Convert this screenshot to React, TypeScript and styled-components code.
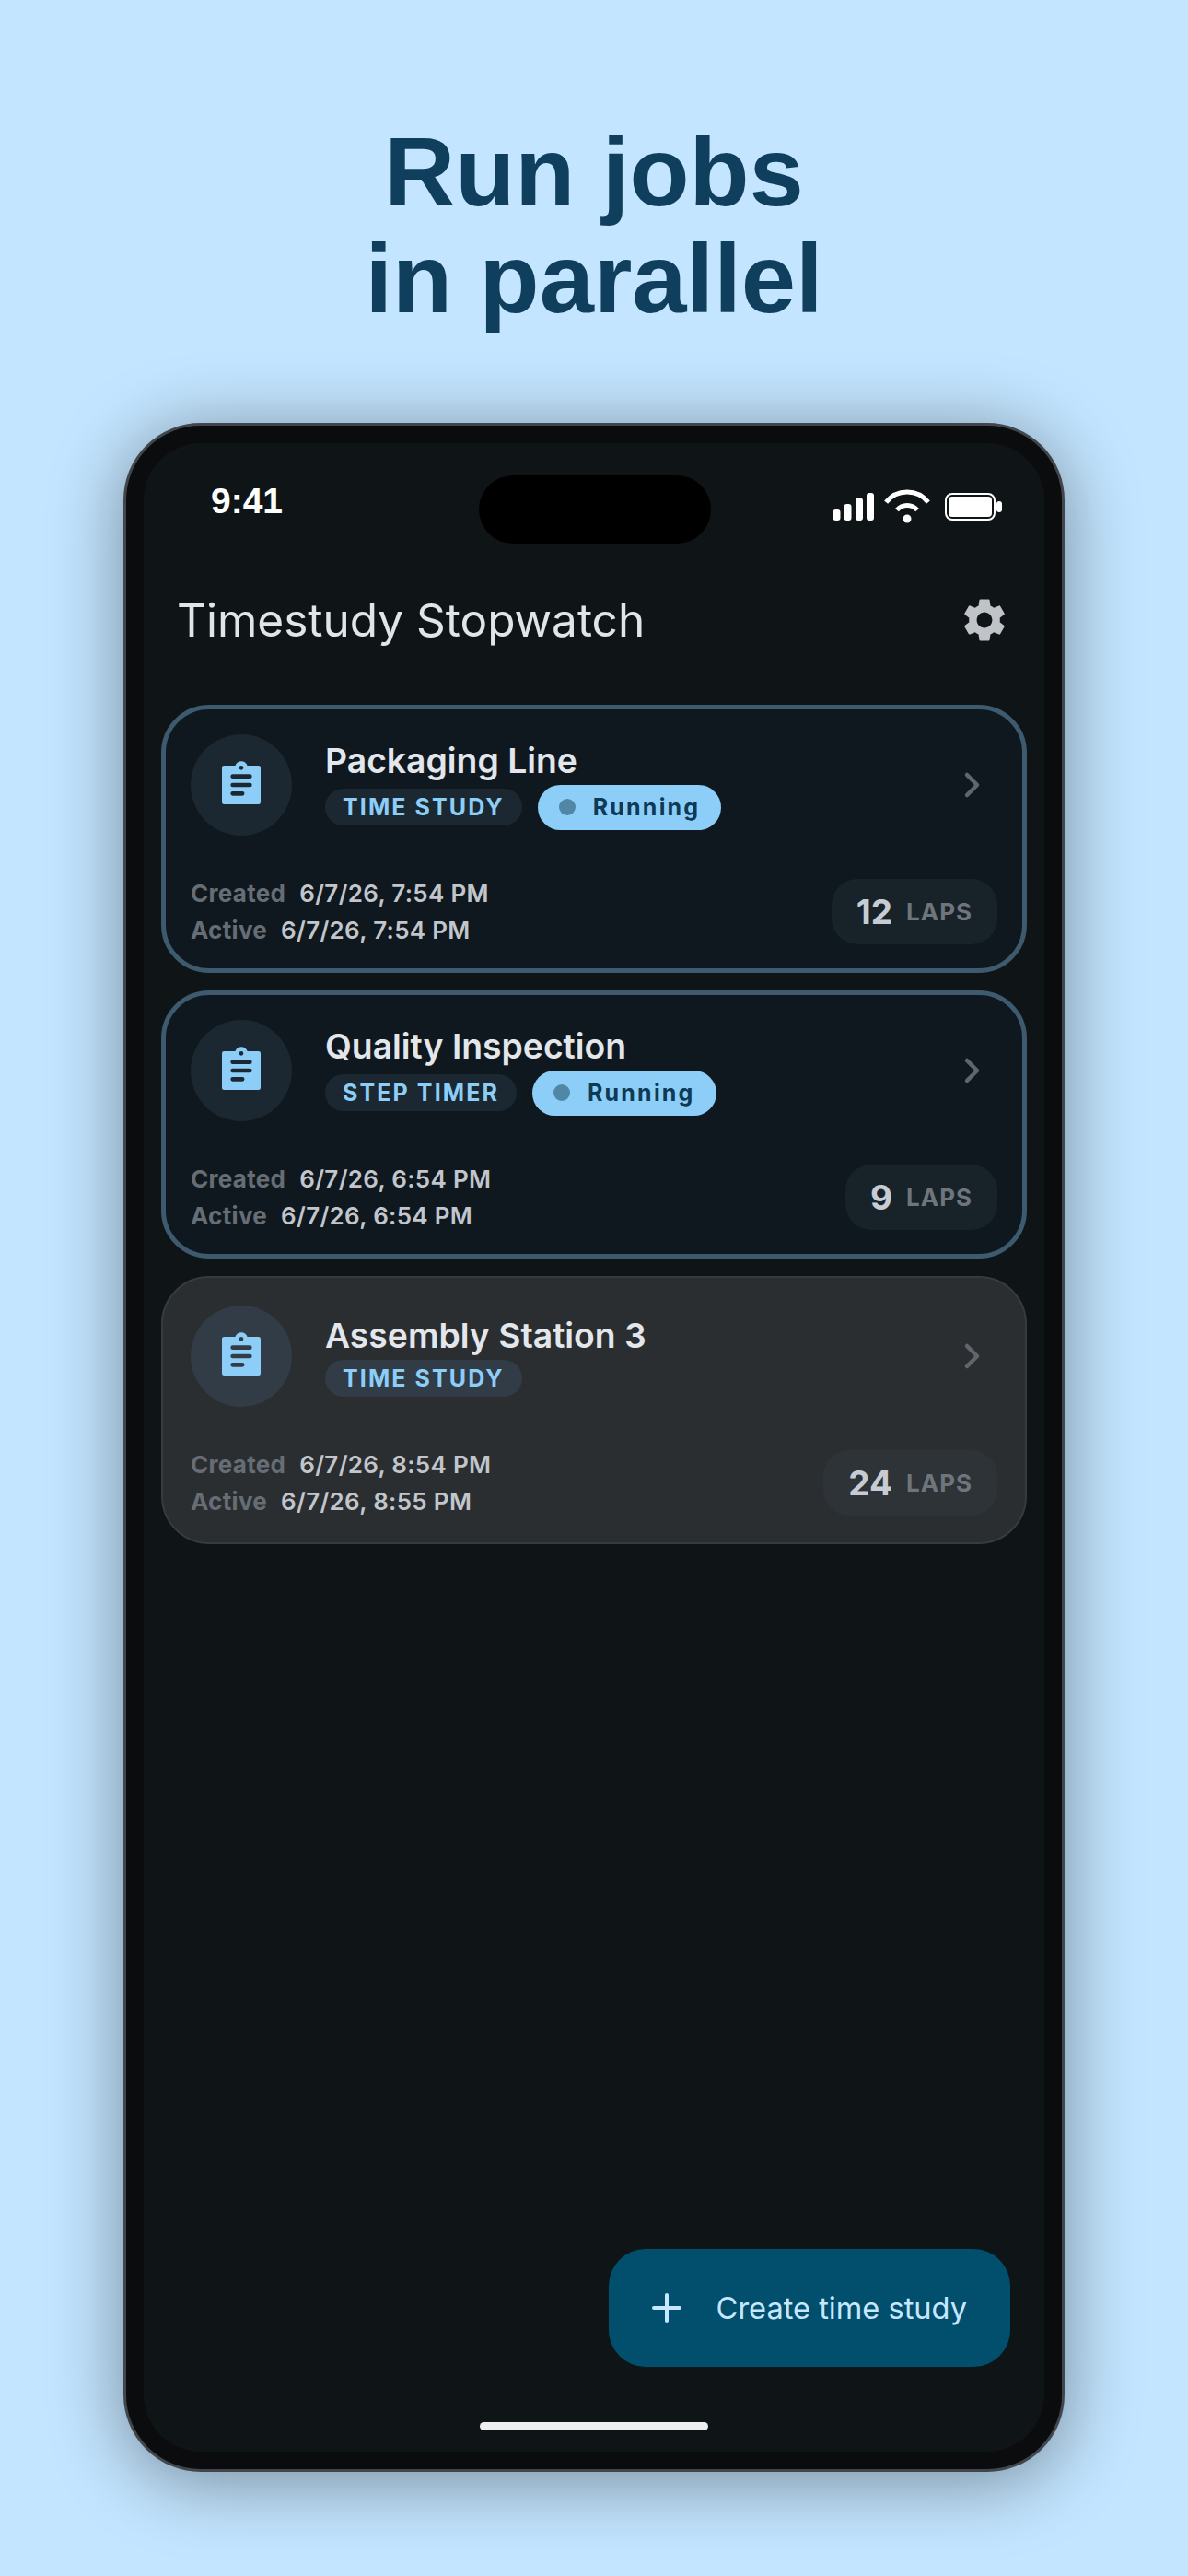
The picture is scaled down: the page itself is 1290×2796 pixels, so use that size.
import React from 'react'
import styled, { createGlobalStyle } from 'styled-components'
import { MdSettings } from 'react-icons/md'

const Global = createGlobalStyle`
html, body {
    margin: 0;
    padding: 0;
    background: #c3e5ff;
}
* {
    box-sizing: border-box;
}
`

interface Study {
    name: string
    kind: string
    running: boolean
    created: string
    active: string
    laps: number
}

const studies: Study[] = [
    { name: 'Packaging Line', kind: 'TIME STUDY', running: true, created: '6/7/26, 7:54 PM', active: '6/7/26, 7:54 PM', laps: 12 },
    { name: 'Quality Inspection', kind: 'STEP TIMER', running: true, created: '6/7/26, 6:54 PM', active: '6/7/26, 6:54 PM', laps: 9 },
    { name: 'Assembly Station 3', kind: 'TIME STUDY', running: false, created: '6/7/26, 8:54 PM', active: '6/7/26, 8:55 PM', laps: 24 },
]

function StudyCard({ study }: { study: Study }) {
    const { name, kind, running, created, active, laps } = study
    return <Card $running={running}>
        <TopRow>
            <IconCircle $running={running}>
                <svg width="56" height="56" viewBox="0 0 24 24" fill="#8ccef7">
                    <path fillRule="evenodd" d="M4 3h5.18C9.6 1.84 10.7 1 12 1s2.4.84 2.82 2H20a1 1 0 0 1 1 1v16a1 1 0 0 1-1 1H4a1 1 0 0 1-1-1V4a1 1 0 0 1 1-1zM12 3a1 1 0 1 0 0 2 1 1 0 0 0 0-2zM8 7a1 1 0 0 0 0 2h8a1 1 0 0 0 0-2H8zM8 11a1 1 0 0 0 0 2h8a1 1 0 0 0 0-2H8zM8 15a1 1 0 0 0 0 2h4.5a1 1 0 0 0 0-2H8z" />
                </svg>
            </IconCircle>
            <TitleBlock>
                <Name>{name}</Name>
                <Chips>
                    <KindChip $running={running}>{kind}</KindChip>
                    {running && <RunningChip><Dot />Running</RunningChip>}
                </Chips>
            </TitleBlock>
            <Chevron viewBox="0 0 52 52">
                <path d="M21 15l11 11-11 11" />
            </Chevron>
        </TopRow>
        <BottomRow>
            <Dates>
                <DateLine><DateLabel>Created</DateLabel>{created}</DateLine>
                <DateLine><DateLabel>Active</DateLabel>{active}</DateLine>
            </Dates>
            <LapsPill $running={running}>
                <LapCount>{laps}</LapCount>
                <LapLabel>LAPS</LapLabel>
            </LapsPill>
        </BottomRow>
    </Card>
}

export default function App() {
    return <Page>
        <Global />
        <Headline>Run jobs<br />in parallel</Headline>
        <Phone>
            <Screen>
                <StatusBar>
                    <Clock>9:41</Clock>
                    <Island />
                    <StatusIcons>
                        <svg width="46" height="32" viewBox="0 0 46 32" fill="#fff">
                            <rect x="0.5" y="19" width="8" height="12" rx="3" />
                            <rect x="12.5" y="13" width="8" height="18" rx="3" />
                            <rect x="25" y="6.5" width="8" height="24.5" rx="3" />
                            <rect x="37" y="1" width="8" height="30" rx="3" />
                        </svg>
                        <svg width="52" height="38" viewBox="0 0 52 38" fill="none" stroke="#fff">
                            <path d="M3.1 14.1A29 29 0 0 1 48.9 14.1" strokeWidth="5" />
                            <path d="M14.9 22.7A14.5 14.5 0 0 1 37.1 22.7" strokeWidth="5" />
                            <circle cx="26" cy="32" r="4.5" fill="#fff" stroke="none" />
                        </svg>
                        <Battery width="62" height="30" viewBox="0 0 62 30" fill="#fff">
                            <rect x="1" y="1" width="53" height="28" rx="7" fill="none" stroke="#fff" strokeWidth="2" />
                            <rect x="4" y="4" width="47" height="22" rx="4" />
                            <rect x="56" y="9" width="6" height="12" rx="3" />
                        </Battery>
                    </StatusIcons>
                </StatusBar>
                <Header>
                    <AppTitle>Timestudy Stopwatch</AppTitle>
                    <MdSettings size={56} color="#c0c4c9" />
                </Header>
                <List>
                    {studies.map(s => <StudyCard key={s.name} study={s} />)}
                </List>
                <Fab>
                    <svg width="32" height="32" viewBox="0 0 32 32" fill="none" stroke="#c5e7ff" strokeWidth="4" strokeLinecap="round">
                        <path d="M16 2v28M2 16h28" />
                    </svg>
                    Create time study
                </Fab>
                <HomeBar />
            </Screen>
        </Phone>
    </Page>
}

const Page = styled.div`
display: flex;
flex-direction: column;
align-items: center;
width: 1290px;
height: 2796px;
overflow: hidden;
background: #c3e5ff;
padding-top: 129px;
`

const Headline = styled.h1`
margin: 0 0 98px;
font-family: "Liberation Sans", Arial, sans-serif;
font-weight: 700;
font-size: 106.5px;
line-height: 116px;
text-align: center;
color: #0f3f5c;
`

const Phone = styled.div`
flex: none;
width: 1022px;
height: 2224px;
padding: 19px;
border: 3px solid #41464d;
border-radius: 84px;
background: #0b0c0e;
box-shadow: 0 10px 80px rgba(0, 0, 0, 0.4);
`

const Screen = styled.div`
display: flex;
flex-direction: column;
height: 100%;
border-radius: 62px;
background: #0f1517;
font-family: Inter, "Noto Sans", sans-serif;
`

const StatusBar = styled.div`
display: grid;
grid-template-columns: 291px 252px 1fr;
align-items: center;
height: 74px;
margin-top: 35px;
padding: 0 46px 0 73px;
`

const Clock = styled.div`
font-family: "Liberation Sans", Arial, sans-serif;
font-weight: 700;
font-size: 39px;
line-height: 46px;
color: #fff;
margin-bottom: 18px;
`

const Island = styled.div`
height: 74px;
border-radius: 37px;
background: #000;
`

const StatusIcons = styled.div`
display: flex;
align-items: center;
justify-content: flex-end;
gap: 9px;
margin-bottom: 6px;
`

const Battery = styled.svg`
margin-left: 6px;
`

const Header = styled.div`
display: flex;
align-items: center;
justify-content: space-between;
height: 175px;
padding: 0 37px 10px 36px;
`

const AppTitle = styled.div`
font-weight: 400;
font-size: 49.5px;
line-height: 64px;
color: #e1e4e8;
`

const List = styled.div`
display: flex;
flex-direction: column;
gap: 19px;
padding: 0 19px;
`

const Card = styled.div<{ $running: boolean }>`
display: flex;
flex-direction: column;
justify-content: space-between;
height: 291px;
padding: ${p => p.$running ? '27px 27px 22px' : '30px 30px 25px'};
border-radius: 52px;
border: ${p => p.$running ? '5px solid #3d5a6e' : '2px solid #363b3f'};
background: ${p => p.$running ? '#0f181e' : '#2a2e31'};
`

const TopRow = styled.div`
display: flex;
align-items: center;
`

const IconCircle = styled.div<{ $running: boolean }>`
flex: none;
display: flex;
align-items: center;
justify-content: center;
width: 110px;
height: 110px;
border-radius: 50%;
background: ${p => p.$running ? '#1b2831' : '#323c46'};
`

const TitleBlock = styled.div`
display: flex;
flex-direction: column;
margin-left: 36px;
`

const Name = styled.div`
font-weight: 600;
font-size: 37.3px;
line-height: 48px;
margin-top: -2px;
padding-bottom: 2px;
color: #e3e6ea;
`

const Chips = styled.div`
display: flex;
align-items: center;
gap: 17px;
`

const KindChip = styled.div<{ $running: boolean }>`
height: 40px;
padding: 0 19px;
border-radius: 20px;
background: ${p => p.$running ? '#1b2831' : '#323c46'};
font-weight: 700;
font-size: 25px;
line-height: 40px;
letter-spacing: 2.1px;
color: #8ccef7;
`

const RunningChip = styled.div`
display: flex;
align-items: center;
height: 49px;
padding: 0 23px;
border-radius: 25px;
background: #8ccef7;
font-weight: 700;
font-size: 25px;
letter-spacing: 2.2px;
color: #0e3a55;
`

const Dot = styled.span`
width: 18px;
height: 18px;
margin-right: 19px;
border-radius: 50%;
background: #4f87a5;
`

const Chevron = styled.svg`
flex: none;
width: 52px;
height: 52px;
margin: 0 2px 0 auto;
fill: none;
stroke: #60666b;
stroke-width: 4.5;
stroke-linecap: round;
stroke-linejoin: round;
`

const BottomRow = styled.div`
display: flex;
align-items: center;
justify-content: space-between;
`

const Dates = styled.div`
display: flex;
flex-direction: column;
font-weight: 600;
font-size: 26px;
line-height: 39.5px;
letter-spacing: 0.3px;
color: #c2c6cc;
`

const DateLine = styled.div`
display: flex;
gap: 15px;
`

const DateLabel = styled.span`
font-weight: 700;
color: #666d74;
`

const LapsPill = styled.div<{ $running: boolean }>`
display: flex;
align-items: center;
gap: 15px;
height: 71px;
padding: 0 27px;
border-radius: 28px;
background: ${p => p.$running ? '#182229' : '#2e3337'};
`

const LapCount = styled.span`
font-weight: 700;
font-size: 37px;
color: #c8ccd2;
`

const LapLabel = styled.span`
font-weight: 700;
font-size: 26px;
letter-spacing: 1px;
color: #6f757c;
`

const Fab = styled.div`
display: flex;
align-items: center;
align-self: flex-end;
gap: 38px;
height: 128px;
margin: auto 37px 60px 0;
padding: 0 47px;
border-radius: 40px;
background: #024e6d;
font-weight: 400;
font-size: 32.6px;
color: #c5e7ff;
`

const HomeBar = styled.div`
flex: none;
align-self: center;
width: 248px;
height: 9px;
margin-bottom: 23px;
border-radius: 5px;
background: #eeeeee;
`
